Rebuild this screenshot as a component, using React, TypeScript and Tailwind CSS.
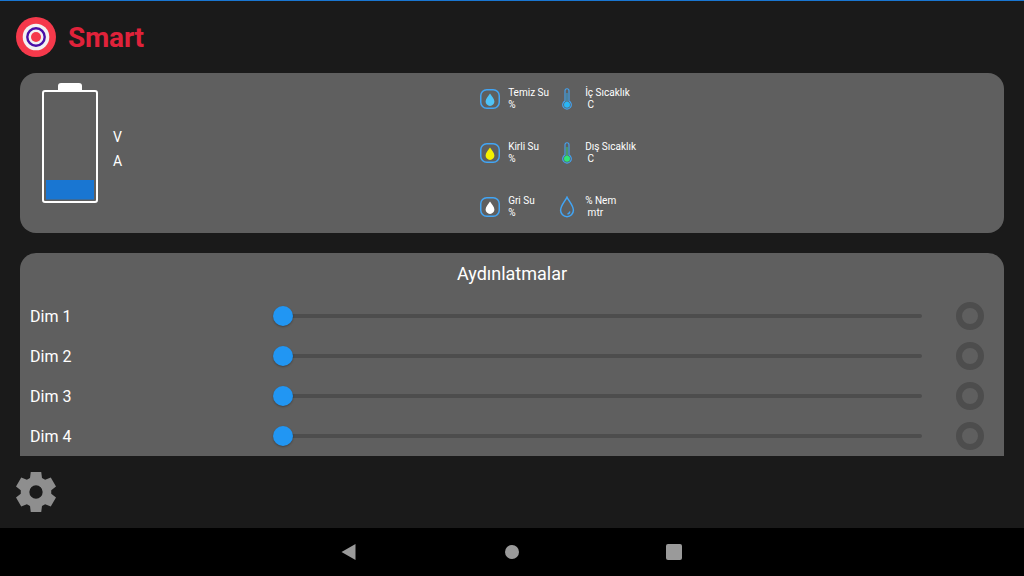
import React from "react";

function Logo() {
  return (
    <svg width="40" height="40" viewBox="0 0 40 40">
      <circle cx="20" cy="20" r="20" fill="#f5394b" />
      <circle cx="20" cy="20" r="13.3" fill="#f2f2f2" />
      <circle cx="20" cy="20" r="8.7" fill="none" stroke="#4a0fa8" strokeWidth="2.4" />
      <circle cx="20" cy="20" r="5" fill="#f5394b" />
    </svg>
  );
}

function Battery() {
  return (
    <svg width="56" height="120" viewBox="0 0 56 120">
      <path d="M16 8V3a3 3 0 0 1 3-3h18a3 3 0 0 1 3 3v5z" fill="#fff" />
      <rect x="1" y="8" width="54" height="111" rx="2" fill="none" stroke="#fff" strokeWidth="2" />
      <rect x="4" y="97" width="48" height="19.5" fill="#1976d2" />
    </svg>
  );
}

function TankIcon({ color }: { color: string }) {
  return (
    <svg width="20" height="20" viewBox="0 0 20 20">
      <rect x="0.75" y="0.75" width="18.5" height="18.5" rx="6" fill="none" stroke="#42a5f5" strokeWidth="1.5" />
      <path d="M10 4.500C8.300 7.300 5.600 9.500 5.600 12.500a4.400 4.400 0 0 0 8.800 0C14.400 9.500 11.700 7.300 10 4.500z" fill={color} />
    </svg>
  );
}

function ThermoIcon({ color }: { color: string }) {
  return (
    <svg width="10" height="22" viewBox="0 0 10 22">
      <path d="M3 13V2.700a2 2 0 0 1 4 0V13a4.300 4.300 0 1 1-4 0z" fill="none" stroke="#42a5f5" strokeWidth="1.100" />
      <rect x="4.300" y="5" width="1.400" height="9" fill={color} opacity="0.6" />
      <circle cx="5" cy="16.800" r="3" fill={color} />
    </svg>
  );
}

function HumidityIcon() {
  return (
    <svg width="16" height="22" viewBox="0 0 16 22">
      <path d="M8 1.200C6.200 5 1.600 9.500 1.600 14.300a6.400 6.400 0 0 0 12.800 0C14.400 9.500 9.800 5 8 1.200z" fill="none" stroke="#42a5f5" strokeWidth="1.500" />
      <path d="M11 15.500a3.200 3.200 0 0 1-2.500 2.500" fill="none" stroke="#42a5f5" strokeWidth="1.300" />
    </svg>
  );
}

const gearPath =
  "M14.500 0H25.500L26.300 6.300L29.600 8.200L35.500 5.800L41 15.200L36 19.100V22.900L41 26.800L35.500 36.200L29.600 33.800L26.300 35.700L25.500 42H14.500L13.700 35.700L10.400 33.800L4.500 36.200L-1 26.800L4 22.900V19.100L-1 15.200L4.500 5.800L10.400 8.200L13.700 6.300Z" +
  "M20 14A7 7 0 1 0 20 28A7 7 0 1 0 20 14Z";

function Gear() {
  return (
    <svg width="40" height="40" viewBox="-1 0 42 42">
      <path d={gearPath} fill="#8e8e8e" fillRule="evenodd" />
    </svg>
  );
}

function Sensor({ icon, iconBox, top, bottom, textW }: { icon: React.ReactNode; iconBox: string; top: string; bottom: string; textW: string }) {
  return (
    <div className="flex items-center h-[24px]">
      <div className={iconBox}>{icon}</div>
      <div className={`${textW} text-[10px] leading-[12px] text-white whitespace-pre`}>
        <div>{top}</div>
        <div>{bottom}</div>
      </div>
    </div>
  );
}

function DimRow({ label }: { label: string }) {
  return (
    <div className="flex items-center h-[40px] pl-[10px] pr-5">
      <div className="w-[253px] pt-[2px] text-base text-white">{label}</div>
      <div className="relative w-[639px] h-[4px] bg-[#4d4d4d] rounded-full">
        <div className="absolute left-[-10px] top-[-8px] w-5 h-5 rounded-full bg-[#2196f3] shadow-[0_1px_2px_rgba(0,0,0,0.3)]" />
      </div>
      <div className="ml-auto w-7 h-7 rounded-full border-[6px] border-[#4d4d4d]" />
    </div>
  );
}

const boxA = "w-[28px] flex justify-start";

export default function App() {
  return (
    <div className="w-[1024px] h-[576px] flex flex-col overflow-hidden bg-[#1a1a1a] font-['Roboto',sans-serif]">
      <div className="h-px bg-[#1976d2]" />
      <header className="h-[72px] flex items-center pl-4 gap-3">
        <Logo />
        <span className="pt-[2px] text-[28px] font-bold tracking-[-0.2px] text-[#e0223a]">Smart</span>
      </header>

      <section className="mx-5 h-[160px] rounded-2xl bg-[#5f5f5f] flex">
        <div className="ml-[22px] mt-[10px]">
          <Battery />
        </div>
        <div className="ml-[15px] mt-[52px] text-sm leading-[24px] text-white">
          <div>V</div>
          <div>A</div>
        </div>
        <div className="ml-[358px] mt-[14px] grid grid-cols-[78px_auto] grid-rows-[24px_24px_24px] gap-y-[30px]">
          <Sensor icon={<TankIcon color="#4fc3f7" />} iconBox={boxA} top="Temiz Su" bottom="%" textW="w-[50px]" />
          <Sensor icon={<ThermoIcon color="#29b6f6" />} iconBox="w-[27px] pl-[4px] flex" top="İç Sıcaklık" bottom=" C" textW="" />
          <Sensor icon={<TankIcon color="#f5f000" />} iconBox={boxA} top="Kirli Su" bottom="%" textW="w-[50px]" />
          <Sensor icon={<ThermoIcon color="#2ee67a" />} iconBox="w-[27px] pl-[4px] flex" top="Dış Sıcaklık" bottom=" C" textW="" />
          <Sensor icon={<TankIcon color="#ffffff" />} iconBox={boxA} top="Gri Su" bottom="%" textW="w-[50px]" />
          <Sensor icon={<HumidityIcon />} iconBox="w-[27px] pl-[1px] flex" top="% Nem" bottom=" mtr" textW="" />
        </div>
      </section>

      <section className="mx-5 mt-5 h-[203px] rounded-t-2xl bg-[#5f5f5f] overflow-hidden">
        <h2 className="h-[43px] pt-[9px] text-center text-lg leading-[24px] text-white">Aydınlatmalar</h2>
        <DimRow label="Dim 1" />
        <DimRow label="Dim 2" />
        <DimRow label="Dim 3" />
        <DimRow label="Dim 4" />
      </section>

      <div className="h-[72px] flex items-center pl-4">
        <Gear />
      </div>

      <nav className="h-[48px] bg-black flex items-center justify-center">
        <div className="w-[162px] flex justify-center pr-[2px]">
          <svg width="16" height="16" viewBox="0 0 16 16"><path d="M0.500 8 14.500 0v16z" fill="#9a9a9a" /></svg>
        </div>
        <div className="w-[162px] flex justify-center">
          <div className="w-[14px] h-[14px] rounded-full bg-[#9a9a9a]" />
        </div>
        <div className="w-[162px] flex justify-center">
          <div className="w-4 h-4 rounded-[2px] bg-[#9a9a9a]" />
        </div>
      </nav>
    </div>
  );
}
